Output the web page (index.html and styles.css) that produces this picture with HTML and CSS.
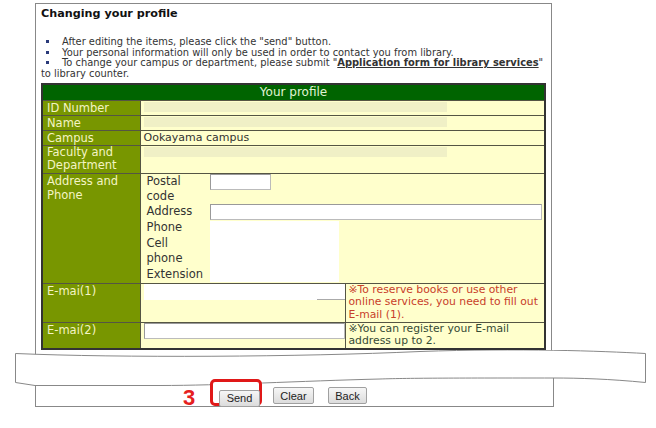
FILE: index.html
```html
<!DOCTYPE html>
<html lang="en">
<head>
    <meta charset="UTF-8">
    <title>Changing your profile</title>
    <link rel="stylesheet" href="styles.css">
</head>
<body>
    <div class="sheet">
        <div class="panel panel-top">
            <h2 class="title">Changing your profile</h2>

            <!-- 안내 문구 -->
            <div class="notes">
                <p><span class="dot"></span>After editing the items, please click the "send" button.</p>
                <p><span class="dot"></span>Your personal information will only be used in order to contact you from library.</p>
                <p><span class="dot"></span>To change your campus or department, please submit "<a href="#">Application form for library services</a>" to library counter.</p>
            </div>

            <table class="profile">
                <colgroup>
                    <col class="col-label">
                    <col class="col-input">
                    <col class="col-note">
                </colgroup>
                <tr class="head">
                    <th colspan="3">Your profile</th>
                </tr>
                <tr>
                    <td class="label">ID Number</td>
                    <td class="value" colspan="2"><span class="blank"></span></td>
                </tr>
                <tr>
                    <td class="label">Name</td>
                    <td class="value" colspan="2"><span class="blank"></span></td>
                </tr>
                <tr>
                    <td class="label">Campus</td>
                    <td class="value" colspan="2">Ookayama campus</td>
                </tr>
                <tr class="tall">
                    <td class="label">Faculty and<br>Department</td>
                    <td class="value" colspan="2"><span class="blank"></span></td>
                </tr>
                <tr>
                    <td class="label">Address and<br>Phone</td>
                    <td class="value address" colspan="2">
                        <div class="address-grid">
                            <span>Postal<br>code</span>
                            <span><span class="field field-postal"></span></span>
                            <span>Address</span>
                            <span><span class="field field-address"></span></span>
                            <span>Phone</span>
                            <span class="phone-box"></span>
                            <span>Cell<br>phone</span>
                            <span>Extension</span>
                        </div>
                    </td>
                </tr>
                <tr>
                    <td class="label">E-mai(1)</td>
                    <td class="mail"><span class="mail-box"></span></td>
                    <td class="note note-warn">※To reserve books or use other online services, you need to fill out E-mail (1).</td>
                </tr>
                <tr>
                    <td class="label">E-mai(2)</td>
                    <td class="mail"><span class="field field-mail"></span></td>
                    <td class="note">※You can register your E-mail address up to 2.</td>
                </tr>
            </table>
        </div>

        <!-- 잘라낸 부분 -->
        <svg class="tear" width="656" height="36" viewBox="0 350 656 36">
            <line x1="35.5" y1="350" x2="35.5" y2="356" stroke="#888" />
            <line x1="551.5" y1="350" x2="551.5" y2="352" stroke="#888" />
            <path d="M15.5,353.5 C120,358 300,357 420,351.5 C520,348 600,351 645.5,353.5 L645.5,382.5 C610,379 580,378 553,378 C460,378 410,378 380,379 C300,381 220,385.5 160,385.5 L35,385.5 L15.5,382.5 Z" fill="#fff" stroke="#888" />
            <line x1="35.5" y1="385.5" x2="35.5" y2="386" stroke="#888" />
            <line x1="553.5" y1="378" x2="553.5" y2="386" stroke="#888" />
        </svg>

        <div class="panel panel-bottom">
            <div class="buttons">
                <span class="step">3</span>
                <span class="mark"><button class="btn btn-send">Send</button></span>
                <button class="btn btn-clear">Clear</button>
                <button class="btn btn-back">Back</button>
            </div>
        </div>
    </div>
</body>
</html>
```

FILE: styles.css
```css
body {
    margin: 0;
    background: #fff;
    font-family: "DejaVu Sans", Verdana, sans-serif;
    color: #333;
}
.sheet {
    padding-top: 3px;
}
.panel {
    margin-left: 35px;
    box-sizing: border-box;
    border: 1px solid #888;
}
.panel-top {
    width: 517px;
    border-bottom: none;
    height: 347px;
    padding: 0 0 0 5px;
}
.title {
    margin: 3px 0 0 0;
    font-size: 11.2px;
    line-height: 14px;
    font-weight: bold;
    color: #111;
}
.notes {
    margin-top: 16px;
    font-size: 9.9px;
    line-height: 10.7px;
}
.notes p {
    margin: 0;
    text-indent: 5px;
}
.notes a {
    color: #333;
    font-weight: bold;
}
.dot {
    display: inline-block;
    width: 3px;
    height: 3px;
    background: #2a3a7a;
    margin-right: 13px;
    vertical-align: 2px;
}
.profile {
    margin-top: 3px;
    width: 505px;
    border-collapse: collapse;
    table-layout: fixed;
    border: 2px solid #333;
    font-size: 11px;
    line-height: 14px;
}
.col-label {
    width: 98px;
}
.col-input {
    width: 205px;
}
.profile th,
.profile td {
    border: 1px solid #555544;
    padding: 0;
    vertical-align: top;
    text-align: left;
}
.head th {
    background: #006400;
    color: #e0f4d4;
    font-weight: normal;
    text-align: center;
    font-size: 12px;
    line-height: 15px;
}
.label {
    background: #789600;
    color: #f4f4c4;
    font-size: 11.5px;
    padding-left: 4px !important;
}
.value {
    background: #ffffcc;
    padding-left: 3px !important;
}
.tall .value,
.tall .label {
    line-height: 13.5px;
}
.blank {
    display: inline-block;
    width: 303px;
    height: 10px;
    background: #f0f0c6;
    vertical-align: -1px;
}
.address {
    padding-left: 6px !important;
}
.address-grid {
    display: grid;
    grid-template-columns: 63px 1fr;
    grid-template-rows: 30px 16px 16px 31px 16px;
    font-size: 11.5px;
    line-height: 15.5px;
}
.address-grid .phone-box {
    grid-column: 2;
    grid-row: 3 / 6;
    width: 129px;
    margin-top: 1px;
    height: 61px;
    background: #fff;
}
.field {
    display: block;
    box-sizing: border-box;
    height: 16px;
    background: #fff;
    border: 1px solid #bbb;
    border-top-color: #999;
    border-left-color: #999;
}
.field-postal {
    width: 61px;
    height: 16px;
}
.field-address {
    width: 332px;
}
.mail {
    background: #ffffcc;
    padding-left: 3px !important;
}
.mail-box {
    display: block;
    height: 16px;
    background: linear-gradient(#aaa, #aaa) right bottom / 28px 1px no-repeat, #fff;
}
.field-mail {
    width: 201px;
}
.note {
    background: #ffffcc;
    color: #354a35;
    font-size: 10.8px;
    line-height: 12.6px;
    padding-left: 3px !important;
}
.note-warn {
    color: #c8402a;
}
.tear {
    display: block;
}
.panel-bottom {
    width: 519px;
    height: 28px;
    border-top: none;
}
.buttons {
    display: flex;
    align-items: flex-start;
    margin-top: -7px;
    padding-left: 147px;
}
.step {
    width: 27px;
    margin-top: 8px;
    font-family: "Liberation Sans", Arial, sans-serif;
    font-weight: bold;
    font-size: 22px;
    line-height: 22px;
    color: #e52020;
}
.mark {
    box-sizing: border-box;
    width: 52px;
    height: 27px;
    padding: 5px 0 0 6px;
    border: 3px solid #e01818;
    border-radius: 5px;
    background: #fff;
}
.btn {
    box-sizing: border-box;
    height: 17px;
    padding: 0;
    font-family: "Liberation Sans", Arial, sans-serif;
    font-size: 11px;
    color: #222;
    background: linear-gradient(#f6f6f6, #dcdcdc);
    border: 1px solid #a0a0a0;
    border-radius: 2px;
}
.btn-send {
    width: 41px;
}
.btn-clear {
    width: 41px;
    margin: 8px 0 0 11px;
}
.btn-back {
    width: 39px;
    margin: 8px 0 0 14px;
}
```
